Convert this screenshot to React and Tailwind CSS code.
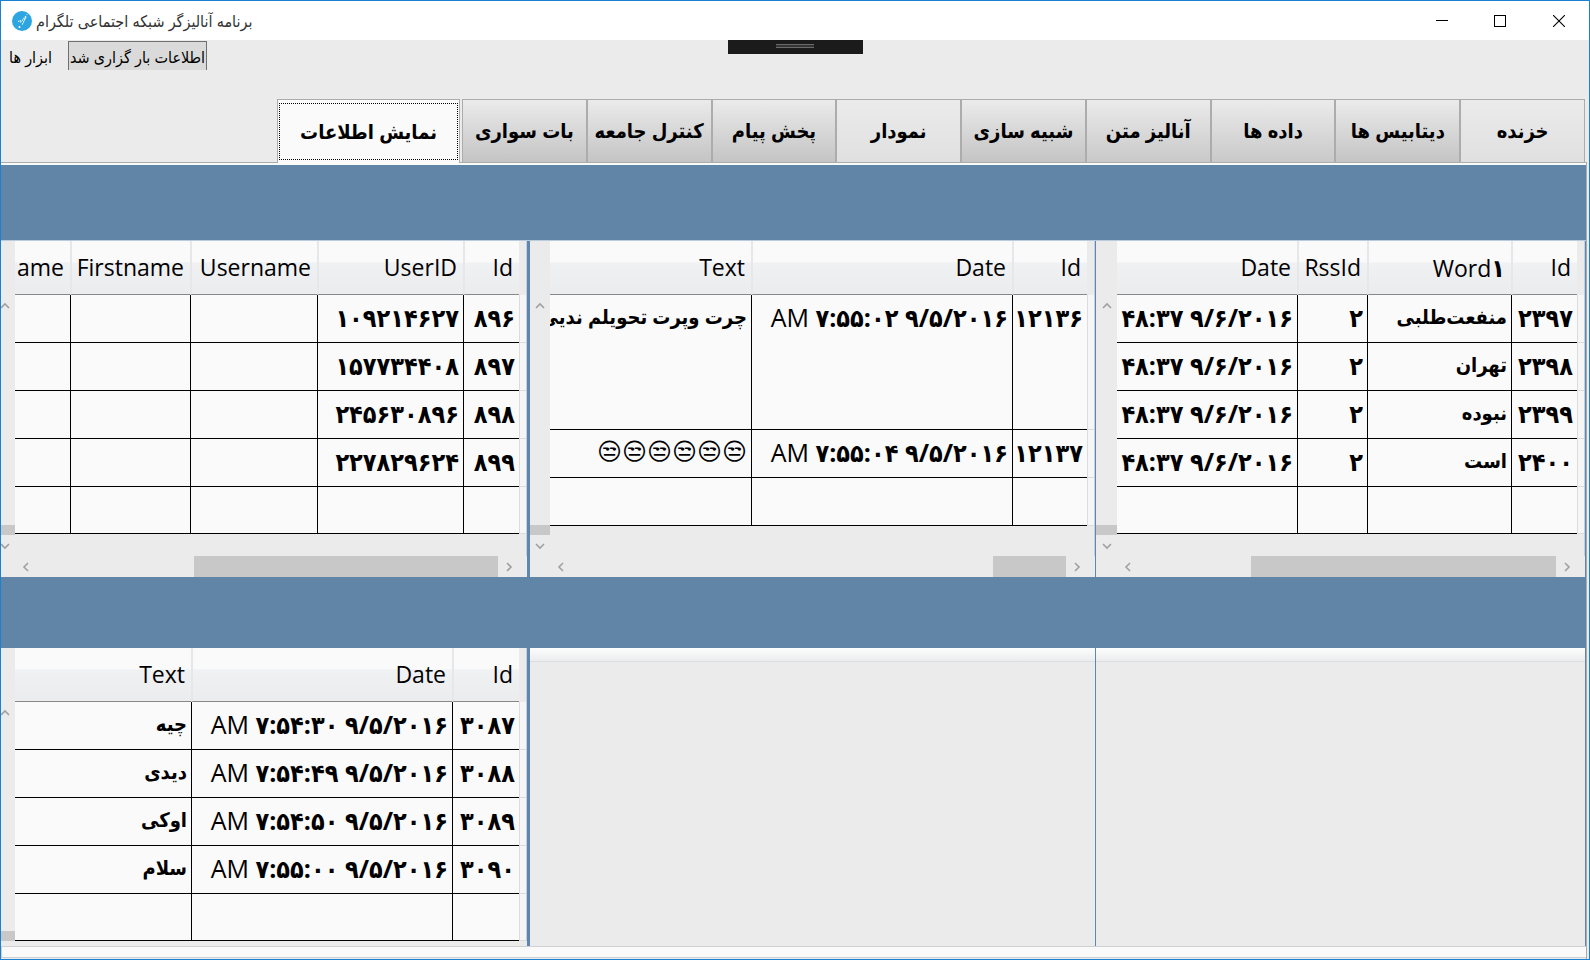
const latin = "font-['Open_Sans','DejaVu_Sans_Condensed','DejaVu_Sans',sans-serif]";
const persian = "font-['Open_Sans','DejaVu_Sans_Condensed','DejaVu_Sans',sans-serif] font-bold";

const tabs = [
  { label: "خزنده", shade: "to-[#e0e0e0]" },
  { label: "دیتابیس ها", shade: "to-[#c4c4c4]" },
  { label: "داده ها", shade: "to-[#c9c9c9]" },
  { label: "آنالیز متن", shade: "to-[#c9c9c9]" },
  { label: "شبیه سازی", shade: "to-[#c4c4c4]" },
  { label: "نمودار", shade: "to-[#e0e0e0]" },
  { label: "پخش پیام", shade: "to-[#c4c4c4]" },
  { label: "کنترل جامعه", shade: "to-[#c4c4c4]" },
  { label: "بات سواری", shade: "to-[#c4c4c4]" },
];

const words = {
  columns: [
    { name: "Id", width: "w-[66px]" },
    { name: "Word۱", width: "w-36" },
    { name: "RssId", width: "w-[70px]" },
    { name: "Date", width: "" },
  ],
  rows: [
    ["۲۳۹۷", "منفعت‌طلبی", "۲", "۹/۶/۲۰۱۶ ۴۸:۳۷"],
    ["۲۳۹۸", "تهران", "۲", "۹/۶/۲۰۱۶ ۴۸:۳۷"],
    ["۲۳۹۹", "نبوده", "۲", "۹/۶/۲۰۱۶ ۴۸:۳۷"],
    ["۲۴۰۰", "است", "۲", "۹/۶/۲۰۱۶ ۴۸:۳۷"],
    ["", "", "", ""],
  ],
};

const messages = {
  columns: [
    { name: "Id", width: "w-[75px]" },
    { name: "Date", width: "w-[261px]" },
    { name: "Text", width: "" },
  ],
  rows: [
    ["۱۲۱۳۶", "۹/۵/۲۰۱۶ ۷:۵۵:۰۲ AM", "چرت وپرت تحویلم ندیی"],
    ["۱۲۱۳۷", "۹/۵/۲۰۱۶ ۷:۵۵:۰۴ AM", "😒😒😒😒😒😒"],
    ["", "", ""],
  ],
};

const users = {
  columns: [
    { name: "Id", width: "w-14" },
    { name: "UserID", width: "w-[146px]" },
    { name: "Username", width: "w-[127px]" },
    { name: "Firstname", width: "w-[120px]" },
    { name: "ame", width: "" },
  ],
  rows: [
    ["۸۹۶", "۱۰۹۲۱۴۶۲۷", "", "", ""],
    ["۸۹۷", "۱۵۷۷۳۴۴۰۸", "", "", ""],
    ["۸۹۸", "۲۴۵۶۳۰۸۹۶", "", "", ""],
    ["۸۹۹", "۲۲۷۸۲۹۶۲۴", "", "", ""],
    ["", "", "", "", ""],
  ],
};

const replies = {
  columns: [
    { name: "Id", width: "w-[67px]" },
    { name: "Date", width: "w-[261px]" },
    { name: "Text", width: "" },
  ],
  rows: [
    ["۳۰۸۷", "۹/۵/۲۰۱۶ ۷:۵۴:۳۰ AM", "چیه"],
    ["۳۰۸۸", "۹/۵/۲۰۱۶ ۷:۵۴:۴۹ AM", "دیدی"],
    ["۳۰۸۹", "۹/۵/۲۰۱۶ ۷:۵۴:۵۰ AM", "اوکی"],
    ["۳۰۹۰", "۹/۵/۲۰۱۶ ۷:۵۵:۰۰ AM", "سلام"],
    ["", "", ""],
  ],
};

function rowHeight(data, i, firstRow) {
  if (i === 0) return firstRow;
  return i === 4 && data.rows.length === 5 ? "h-[47px]" : "h-12";
}

function Chevron({ points }) {
  return (
    <svg width="10" height="10" viewBox="0 0 10 10" fill="none" stroke="#a0a0a0" strokeWidth="1.6" className="shrink-0">
      <polyline points={points} />
    </svg>
  );
}

function Cell({ text }) {
  if (text.startsWith("😒")) {
    return <span className="font-['DejaVu_Sans',sans-serif] text-2xl leading-9 font-normal">{text}</span>;
  }
  if (!/^[۰-۹]/.test(text)) {
    return <span className="text-xl leading-9">{text}</span>;
  }
  const isTime = text.endsWith(" AM");
  return (
    <span className="text-[25px] leading-9">
      {isTime ? text.slice(0, -2) : text}
      {isTime && <span className="font-normal">AM</span>}
    </span>
  );
}

function Grid({ data, firstRow = "h-12" }) {
  return (
    <table className="w-full table-fixed border-separate border-spacing-0 bg-[#fafafa]">
      <thead>
        <tr className="h-[54px]">
          {data.columns.map((c) => (
            <th
              key={c.name}
              scope="col"
              className={`overflow-hidden whitespace-nowrap border-b border-b-[#888888] border-l-2 border-l-[#e6e7e9] bg-linear-to-b from-[#fafafa] from-40% via-[#f0f1f3] via-41% to-[#ebecee] pr-1.5 text-right text-[23px] font-normal last:border-l-0 ${c.width}`}
            >
              {c.name.endsWith("۱") ? (
                <span dir="ltr">
                  {c.name.slice(0, -1)}
                  <b className="text-[25px]">۱</b>
                </span>
              ) : (
                c.name
              )}
            </th>
          ))}
        </tr>
      </thead>
      <tbody>
        {data.rows.map((row, i) => (
          <tr key={i} className={rowHeight(data, i, firstRow)}>
            {row.map((text, j) => (
              <td
                key={j}
                className={`overflow-hidden whitespace-nowrap border-b border-l border-black pr-1 pt-1 align-top text-right leading-9 last:border-l-0 ${persian}`}
              >
                {text && <Cell text={text} />}
              </td>
            ))}
          </tr>
        ))}
      </tbody>
    </table>
  );
}

function RowHeads({ data, firstRow = "h-12" }) {
  return (
    <div className="w-2 shrink-0 border-r border-[#c3d1de]">
      <div className="h-[54px]" />
      {data.rows.map((_, i) => (
        <div key={i} className={`border-b border-l border-[#dcdcdc] bg-[#f6f6f7] ${rowHeight(data, i, firstRow)}`} />
      ))}
    </div>
  );
}

function VerticalBar({ width, withEnd = true, label }) {
  return (
    <div className={`flex shrink-0 flex-col items-end overflow-hidden pt-[53px] ${width}`}>
      <button type="button" aria-label={`${label} up`} className="flex h-6 w-[21px] items-center justify-center">
        <Chevron points="1,7 5,3 9,7" />
      </button>
      <div className="w-full flex-1" />
      <div className="h-[10px] w-full bg-[#c8c8c8]" />
      {withEnd && (
        <button type="button" aria-label={`${label} down`} className="flex h-[21px] w-[21px] items-center justify-center">
          <Chevron points="1,3 5,7 9,3" />
        </button>
      )}
    </div>
  );
}

function HorizontalBar({ pad, thumb, label }) {
  return (
    <div dir="ltr" className={`flex h-[21px] shrink-0 pr-2 ${pad}`}>
      <button type="button" aria-label={`${label} left`} className="flex w-[21px] items-center justify-center">
        <Chevron points="7,1 3,5 7,9" />
      </button>
      <div className="flex-1" />
      <div className={`bg-[#c8c8c8] ${thumb}`} />
      <button type="button" aria-label={`${label} right`} className="flex w-[21px] items-center justify-center">
        <Chevron points="3,1 7,5 3,9" />
      </button>
    </div>
  );
}

function Pane({ data, label, edge = "", bar, pad, thumb, firstRow }) {
  return (
    <section dir="rtl" aria-label={label} className={`flex min-w-0 flex-col border-[#5f86ad] ${edge}`}>
      <div className="flex min-h-0 flex-1">
        <RowHeads data={data} firstRow={firstRow} />
        <div className="min-w-0 flex-1">
          <Grid data={data} firstRow={firstRow} />
        </div>
        <div dir="ltr" className="flex shrink-0">
          <VerticalBar width={bar} withEnd={Boolean(thumb)} label={label} />
        </div>
      </div>
      {thumb && <HorizontalBar pad={pad} thumb={thumb} label={label} />}
    </section>
  );
}

function EmptyPane({ edge }) {
  return (
    <section className={`border-[#5f86ad] ${edge}`}>
      <div className="h-[14px] border-b border-[#dddedf] bg-linear-to-b from-[#fdfdfd] to-[#ebecee]" />
    </section>
  );
}

export default function App() {
  return (
    <div className={`flex min-h-screen flex-col border border-[#1a80d2] bg-[#ebebeb] text-black ${latin}`}>
      <header className="flex h-[39px] items-center bg-white pl-[11px]">
        <svg width="20" height="20" viewBox="0 0 20 20" className="mr-1 shrink-0">
          <circle cx="10" cy="10" r="10" fill="#2ca5e0" />
          <path d="M14 5 L8 12 M14 6 L10 14 M6 10.5 L9 9.5" stroke="#fff" strokeWidth="1.1" strokeDasharray="1.6 0.7" fill="none" />
          <circle cx="7.5" cy="16" r="1" fill="#fff" />
          <circle cx="15" cy="3.5" r="0.5" fill="#fff" />
        </svg>
        <h1 dir="rtl" className="text-base text-[#333333]">
          برنامه آنالیزگر شبکه اجتماعی تلگرام
        </h1>
        <div className="ml-auto flex h-full">
          <button type="button" aria-label="Minimize" className="flex w-[58px] items-center justify-center">
            <svg width="12" height="12" viewBox="0 0 12 12" shapeRendering="crispEdges">
              <rect x="0" y="5" width="12" height="1" />
            </svg>
          </button>
          <button type="button" aria-label="Maximize" className="flex w-[58px] items-center justify-center">
            <svg width="12" height="12" viewBox="0 0 12 12" fill="none" stroke="#000" shapeRendering="crispEdges">
              <rect x="0.5" y="0.5" width="11" height="11" />
            </svg>
          </button>
          <button type="button" aria-label="Close" className="flex w-[60px] items-center justify-center">
            <svg width="12" height="12" viewBox="0 0 12 12" stroke="#000" strokeWidth="1.1">
              <path d="M0 0 L12 12 M12 0 L0 12" />
            </svg>
          </button>
        </div>
      </header>

      <div className="grid h-[59px] grid-cols-[1fr_auto_1fr] items-start">
        <nav className="flex h-[30px] items-stretch gap-4 pl-2 text-base">
          <button type="button" dir="rtl" className="pt-1">ابزار ها</button>
          <button type="button" dir="rtl" className="mt-px border border-b-0 border-[#707070] bg-[#dadada] px-px pt-0.5">
            اطلاعات بار گزاری شد
          </button>
        </nav>
        <div className="flex h-[14px] w-[135px] justify-center bg-[#1b1b1b] pt-1">
          <div className="h-1 w-[38px] border-y border-[#6a6a6a] bg-[#333333]" />
        </div>
      </div>

      <div dir="rtl" role="tablist" className="flex h-[63px] gap-0.5 pr-1">
        <div role="presentation" className="flex w-[1123px]">
          {tabs.map((t) => (
            <button
              key={t.label}
              type="button"
              role="tab"
              aria-selected="false"
              className={`flex-1 basis-0 whitespace-nowrap border border-b-0 border-[#acacac] bg-linear-to-b from-[#ebebeb] text-xl ${persian} ${t.shade}`}
            >
              {t.label}
            </button>
          ))}
        </div>
        <button
          type="button"
          role="tab"
          aria-selected="true"
          className={`relative -mb-px w-[183px] whitespace-nowrap border border-b-0 border-[#acacac] bg-[#fafafa] p-px text-xl ${persian}`}
        >
          <span className="flex h-[57px] items-center justify-center border border-dotted border-black">نمایش اطلاعات</span>
        </button>
      </div>

      <main className="mr-[2px] flex flex-1 flex-col border-r border-t border-[#acacac]">
        <div className="h-[2px] bg-[#fafafa]" />
        <div className="h-[76px] border-b border-[#b9cbdc] bg-[#6185a6]" />
        <div className="grid h-[336px] grid-cols-[minmax(0,526fr)_minmax(0,568fr)_minmax(0,491fr)]">
          <Pane data={users} label="Users" bar="w-[14px]" pad="pl-[14px]" thumb="w-[304px]" />
          <Pane data={messages} label="Messages" edge="border-l-3" bar="w-5" pad="pl-5" thumb="w-[73px]" firstRow="h-[135px]" />
          <Pane data={words} label="Words" edge="border-x" bar="w-[21px]" pad="pl-[21px]" thumb="w-[305px]" />
        </div>
        <div className="h-[71px] bg-[#6185a6]" />
        <div className="grid h-[298px] grid-cols-[minmax(0,526fr)_minmax(0,568fr)_minmax(0,491fr)]">
          <div className="grid pb-[5px]">
            <Pane data={replies} label="Replies" bar="w-[14px]" />
          </div>
          <EmptyPane edge="border-l-3" />
          <EmptyPane edge="border-x" />
        </div>
        <footer className="mb-px min-h-[11px] flex-1 border-y border-l border-[#cfd0d2] bg-[#fafafa]" />
      </main>
    </div>
  );
}
